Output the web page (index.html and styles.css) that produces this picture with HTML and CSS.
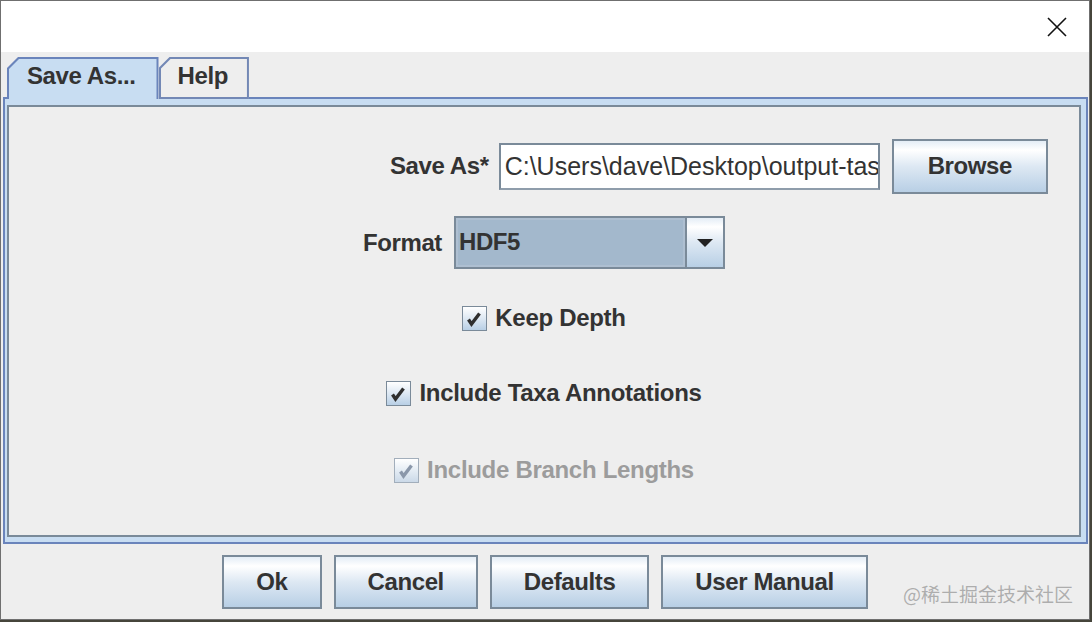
FILE: index.html
```html
<!DOCTYPE html>
<html lang="en">
<head>
    <meta charset="UTF-8">
    <title>Save As</title>
    <link rel="stylesheet" href="styles.css">
</head>
<body>
    <div class="window">
        <div class="titlebar">
            <svg class="close" width="20" height="20" viewBox="0 0 20 20">
                <path d="M1 1 L19 19 M19 1 L1 19" stroke="#111" stroke-width="1.6" fill="none"/>
            </svg>
        </div>
        <div class="tabs">
            <div class="tab-edge"></div>
            <div class="tab selected"><div class="tab-face">Save As...</div></div>
            <div class="tab"><div class="tab-face">Help</div></div>
            <div class="tab-fill"></div>
        </div>
        <div class="panel">
            <div class="content">
                <div class="row row-file">
                    <span class="label">Save As*</span>
                    <div class="field">C:\Users\dave\Desktop\output-tass</div>
                    <button class="btn btn-browse">Browse</button>
                </div>
                <div class="row row-format">
                    <span class="label">Format</span>
                    <div class="combo">
                        <div class="combo-value">HDF5</div>
                        <div class="combo-arrow"><span class="triangle"></span></div>
                    </div>
                </div>
                <div class="row row-check1">
                    <span class="check"><svg width="23" height="23" viewBox="0 0 23 23"><path d="M5.5 12.5 L8.5 17 L16.5 6.5" stroke="#2e2e2e" stroke-width="3.4" fill="none"/></svg></span>
                    <span class="check-label">Keep Depth</span>
                </div>
                <div class="row row-check2">
                    <span class="check"><svg width="23" height="23" viewBox="0 0 23 23"><path d="M5.5 12.5 L8.5 17 L16.5 6.5" stroke="#2e2e2e" stroke-width="3.4" fill="none"/></svg></span>
                    <span class="check-label">Include Taxa Annotations</span>
                </div>
                <div class="row row-check3">
                    <span class="check disabled"><svg width="23" height="23" viewBox="0 0 23 23"><path d="M5.5 12.5 L8.5 17 L16.5 6.5" stroke="#8a97aa" stroke-width="3.4" fill="none"/></svg></span>
                    <span class="check-label disabled">Include Branch Lengths</span>
                </div>
            </div>
        </div>
        <div class="footer">
            <button class="btn">Ok</button>
            <button class="btn">Cancel</button>
            <button class="btn">Defaults</button>
            <button class="btn">User Manual</button>
        </div>
        <div class="watermark">@稀土掘金技术社区</div>
    </div>
</body>
</html>
```

FILE: styles.css
```css
body {
    margin: 0;
    background: #46453b;
    font-family: "Liberation Sans", Arial, sans-serif;
    color: #333333;
}
.window {
    position: relative;
    width: 1090px;
    height: 620px;
    box-sizing: border-box;
    border: 1px solid #6f6f6f;
    background: #eeeeee;
    display: flex;
    flex-direction: column;
}
.titlebar {
    height: 51px;
    background: #ffffff;
    display: flex;
    align-items: center;
    justify-content: flex-end;
    padding-right: 22px;
}
.tabs {
    height: 47px;
    display: flex;
    align-items: flex-end;
    padding: 0 1px 0 2px;
}
.tab-edge {
    width: 4px;
    border-bottom: 2px solid #6a84bb;
}
.tab-fill {
    flex: 1;
    border-bottom: 2px solid #6a84bb;
}
.tab {
    height: 42px;
    box-sizing: border-box;
    background: #7388b5;
    padding: 2px 2px 2px 2px;
    clip-path: polygon(11px 0, 100% 0, 100% 100%, 0 100%, 0 11px);
}
.tab.selected {
    background: #6a84bb;
    padding-bottom: 0;
}
.tab-face {
    height: 100%;
    box-sizing: border-box;
    background: #eeeeee;
    clip-path: polygon(10px 0, 100% 0, 100% 100%, 0 100%, 0 10px);
    display: flex;
    align-items: center;
    padding: 0 19px 4px 17px;
    font-size: 24px;
    font-weight: bold;
    letter-spacing: -0.4px;
}
.tab.selected .tab-face {
    background: #c8ddf2;
    padding: 0 21px 6px 18px;
}
.panel {
    height: 445px;
    box-sizing: border-box;
    margin: 0 1px 0 2px;
    border: 2px solid #6a84bb;
    border-top: none;
    background: #c8ddf2;
    padding: 6px 5px 5px 2px;
}
.content {
    height: 100%;
    box-sizing: border-box;
    border: 2px solid #7a8a99;
    background: #eeeeee;
    display: flex;
    flex-direction: column;
    padding-top: 31px;
}
.row {
    display: flex;
    align-items: center;
    justify-content: center;
}
.row-file {
    height: 56px;
    padding-left: 350px;
}
.row-format {
    height: 53px;
    margin-top: 22px;
}
.row-check1 {
    height: 40px;
    margin-top: 29px;
}
.row-check2 {
    height: 40px;
    margin-top: 35px;
}
.row-check3 {
    height: 40px;
    margin-top: 37px;
}
.label {
    font-size: 24px;
    font-weight: bold;
    letter-spacing: -0.4px;
    margin-right: 10px;
}
.row-format .label {
    margin-right: 12px;
}
.field {
    width: 381px;
    height: 47px;
    box-sizing: border-box;
    border: 2px solid #7a8a99;
    border-bottom-color: #8f9dab;
    background: #ffffff;
    font-size: 25px;
    line-height: 43px;
    padding-left: 4px;
    white-space: nowrap;
    overflow: hidden;
    margin-right: 12px;
}
.btn {
    font: inherit;
    font-size: 24px;
    font-weight: bold;
    letter-spacing: -0.4px;
    color: #333333;
    height: 54px;
    padding: 0 32px;
    border: 2px solid #7a8a99;
    background: linear-gradient(#e4edf6 0%, #ffffff 18%, #dde8f3 50%, #b8cfe5 100%);
}
.btn-browse {
    height: 55px;
    padding: 0 34px;
}
.combo {
    width: 271px;
    height: 53px;
    box-sizing: border-box;
    border: 2px solid #7a8a99;
    display: flex;
}
.combo-value {
    flex: 1;
    background: #a3b8cc;
    box-shadow: inset 0 0 0 2px #aebfd1;
    display: flex;
    align-items: center;
    padding-left: 3px;
    padding-bottom: 2px;
    font-size: 24px;
    font-weight: bold;
    letter-spacing: -0.4px;
}
.combo-arrow {
    width: 36px;
    border-left: 2px solid #7a8a99;
    background: linear-gradient(#e4edf6 0%, #ffffff 18%, #dde8f3 50%, #b8cfe5 100%);
    display: flex;
    align-items: center;
    justify-content: center;
}
.triangle {
    width: 0;
    height: 0;
    border-left: 8px solid transparent;
    border-right: 8px solid transparent;
    border-top: 8px solid #222222;
}
.check {
    width: 23px;
    height: 23px;
    border: 1px solid #7a8a99;
    background: linear-gradient(#ffffff 0%, #dde8f3 50%, #b8cfe5 100%);
    margin-right: 8px;
    display: flex;
}
.check.disabled {
    border-color: #a2aebb;
    background: linear-gradient(#ffffff 0%, #e4ecf4 50%, #cbd9e8 100%);
}
.check-label {
    font-size: 24px;
    font-weight: bold;
    letter-spacing: -0.3px;
}
.check-label.disabled {
    color: #9c9c9c;
}
.footer {
    height: 75px;
    display: flex;
    justify-content: center;
    align-items: flex-start;
    gap: 12px;
    padding-top: 11px;
    box-sizing: border-box;
}
.watermark {
    position: absolute;
    right: 16px;
    top: 579px;
    font-family: "Noto Sans CJK SC", sans-serif;
    font-size: 19px;
    color: rgba(130, 130, 130, 0.6);
}
```
